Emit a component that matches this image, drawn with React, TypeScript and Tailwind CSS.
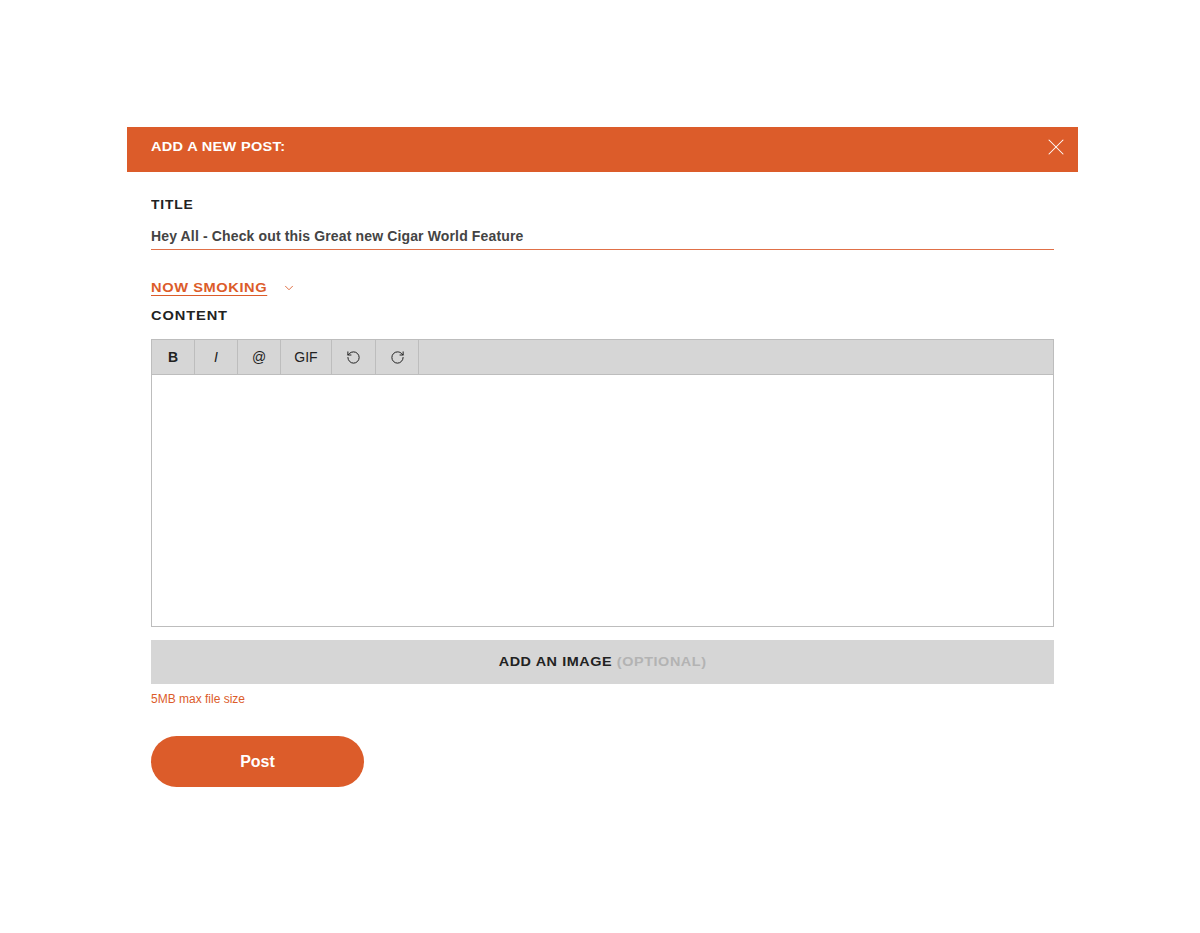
import { X, ChevronDown, RotateCcw, RotateCw } from 'lucide-react';

const wide = { fontFamily: '"Liberation Sans", Arial, sans-serif' };

const ToolButton = ({ children, className = '' }: { children: React.ReactNode; className?: string }) => (
  <button className={`h-full flex items-center justify-center border-r border-[#bdbdbd] text-[14px] text-[#222] ${className}`}>
    {children}
  </button>
);

export default function App() {
  return (
    <div className="w-[1200px] h-[933px] bg-white pt-[127px] px-[127px]" style={wide}>
      <div className="w-[951px]">
        <div className="h-[45px] bg-[#dc5c2a] flex items-center justify-between pl-[24px] pr-[8px] pb-[6px]">
          <span className="text-white font-bold text-[13px] leading-[16px] tracking-[0.02em] scale-x-[1.12] origin-left">ADD A NEW POST:</span>
          <X className="w-[28px] h-[28px] text-white" strokeWidth={0.9} />
        </div>

        <div className="px-[24px] pt-[25px]">
          <div className="text-[12px] leading-[16px] font-bold text-[#222] tracking-[0.06em] scale-x-[1.15] origin-left">TITLE</div>
          <div className="mt-[13px] pb-[3px] text-[14px] leading-[20px] font-bold text-[#444] tracking-[0.01em]">
            Hey All - Check out this Great new Cigar World Feature
          </div>
          <div className="h-px bg-[#e07048]" />

          <div className="mt-[30px] flex items-center">
            <span className="text-[12px] leading-[16px] font-bold text-[#dc5c2a] underline underline-offset-[3px] tracking-[0.04em] scale-x-[1.22] origin-left">NOW SMOKING</span>
            <ChevronDown className="w-[14px] h-[14px] text-[#dc5c2a] ml-[36px]" strokeWidth={1.5} />
          </div>

          <div className="mt-[12px] text-[12px] leading-[16px] font-bold text-[#222] tracking-[0.06em] scale-x-[1.22] origin-left">CONTENT</div>

          <div className="mt-[15px] border border-[#bdbdbd]">
            <div className="h-[35px] bg-[#d6d6d6] flex border-b border-[#bdbdbd]">
              <ToolButton className="w-[43px] font-bold">B</ToolButton>
              <ToolButton className="w-[43px] italic">I</ToolButton>
              <ToolButton className="w-[43px] text-[12px]">@</ToolButton>
              <ToolButton className="w-[51px]">GIF</ToolButton>
              <ToolButton className="w-[44px]"><RotateCcw className="w-[15px] h-[15px]" strokeWidth={1.6} /></ToolButton>
              <ToolButton className="w-[43px]"><RotateCw className="w-[15px] h-[15px]" strokeWidth={1.6} /></ToolButton>
            </div>
            <div className="h-[251px] bg-white" />
          </div>

          <div className="mt-[13px] h-[44px] bg-[#d6d6d6] flex items-center justify-center">
            <span className="text-[12px] leading-[16px] font-bold tracking-[0.04em] scale-x-[1.2]">
              <span className="text-[#222]">ADD AN IMAGE</span>
              <span className="text-[#b3b3b3]"> (OPTIONAL)</span>
            </span>
          </div>

          <div className="mt-[7px] text-[12px] leading-[16px] text-[#dc5c2a]">5MB max file size</div>

          <button className="mt-[29px] w-[213px] h-[51px] rounded-full bg-[#dc5c2a] text-white font-bold text-[16px]">
            Post
          </button>
        </div>
      </div>
    </div>
  );
}
